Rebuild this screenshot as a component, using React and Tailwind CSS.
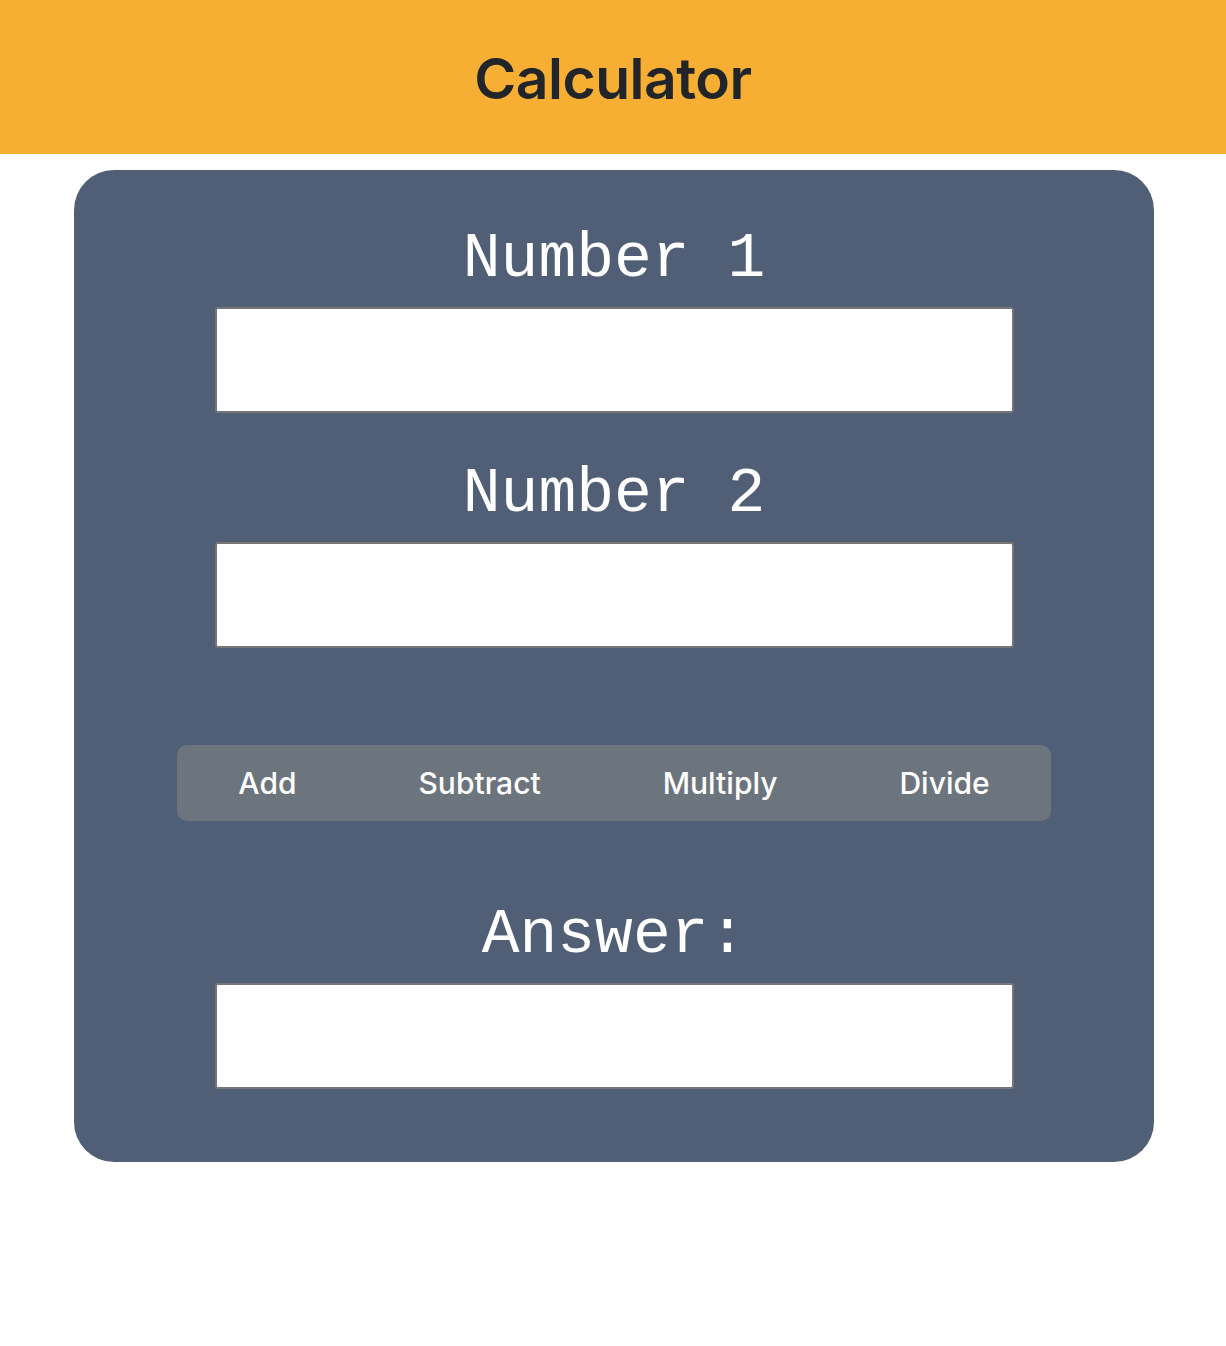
import { useState } from 'react'

const OPS = ['Add', 'Subtract', 'Multiply', 'Divide']

function Field({ label, value, onChange, readOnly }) {
  return (
    <div className="flex flex-col items-center">
      <div className="h-[76px] text-[63px] leading-[84px] text-white font-['Liberation_Mono',monospace]">
        {label}
      </div>
      <input
        type="text"
        value={value}
        readOnly={readOnly}
        onChange={(e) => onChange && onChange(e.target.value)}
        className="mt-[13px] w-[799px] h-[106px] bg-white border-2 border-[#767676] rounded-[3px] px-3 text-3xl outline-none"
      />
    </div>
  )
}

export default function App() {
  const [a, setA] = useState('')
  const [b, setB] = useState('')
  const [answer, setAnswer] = useState('')

  const calc = (op) => {
    const x = parseFloat(a)
    const y = parseFloat(b)
    if (isNaN(x) || isNaN(y)) return setAnswer('')
    if (op === 'Add') setAnswer(String(x + y))
    if (op === 'Subtract') setAnswer(String(x - y))
    if (op === 'Multiply') setAnswer(String(x * y))
    if (op === 'Divide') setAnswer(String(x / y))
  }

  return (
    <div className="min-h-[1346px] bg-white font-['Inter',sans-serif]">
      {/* Header */}
      <div className="h-[154px] bg-[#f6ae33] flex items-center justify-center">
        <h1 className="text-[57px] font-semibold text-[#212529] tracking-[-0.5px] pt-1">Calculator</h1>
      </div>

      {/* Card */}
      <div className="ml-[74px] w-[1080px] mt-4 rounded-[40px] bg-[#505f76] pt-[48px] pb-[73px] flex flex-col items-center">
        <Field label="Number 1" value={a} onChange={setA} />
        <div className="mt-[40px]">
          <Field label="Number 2" value={b} onChange={setB} />
        </div>

        <div className="mt-[97px] flex bg-[#6c757d] rounded-[10px] h-[76px]">
          {OPS.map((op) => (
            <button
              key={op}
              onClick={() => calc(op)}
              className="px-[61px] text-[30px] text-white font-medium"
            >
              {op}
            </button>
          ))}
        </div>

        <div className="mt-[73px]">
          <Field label="Answer:" value={answer} readOnly />
        </div>
      </div>
    </div>
  )
}
